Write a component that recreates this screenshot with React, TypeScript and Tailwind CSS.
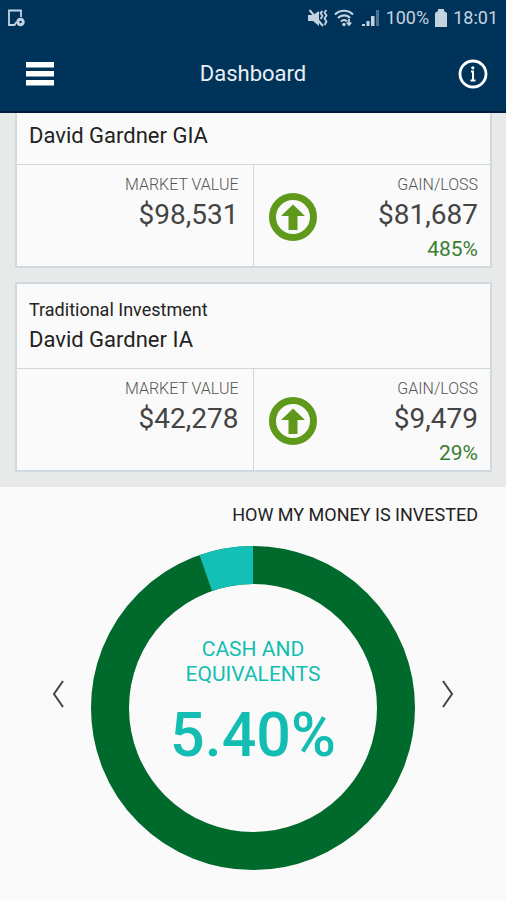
import React from 'react';

interface Account {
  type?: string;
  name: string;
  marketValue: string;
  gain: string;
  gainPercent: string;
}

const accounts: Account[] = [
  { name: 'David Gardner GIA', marketValue: '$98,531', gain: '$81,687', gainPercent: '485%' },
  { type: 'Traditional Investment', name: 'David Gardner IA', marketValue: '$42,278', gain: '$9,479', gainPercent: '29%' },
];

const allocation = { label: 'Cash and Equivalents', percent: 5.4 };

export default function App() {
  return (
    <div className="min-h-screen bg-[#fafafa] font-['Roboto',sans-serif] text-[#222222]">
      <header className="bg-[#00335a] text-white border-b-2 border-[#001c3c]">
        <StatusBar />
        <div className="flex items-center justify-between h-[75px] px-[18px]">
          <button aria-label="Menu" className="flex justify-center w-11">
            <svg viewBox="0 0 28 24" className="w-7 h-6" fill="currentColor">
              <path d="M0 0h28v5.6H0zM0 9h28v5.6H0zM0 18h28v5.6H0z" />
            </svg>
          </button>
          <h1 className="text-[22px] leading-7 text-[#e9eff5]">Dashboard</h1>
          <button aria-label="Information" className="flex justify-end w-11">
            <svg viewBox="0 0 30 30" className="w-[30px] h-[30px]" fill="none" stroke="currentColor">
              <circle cx="15" cy="15" r="13" strokeWidth="2.8" />
              <path d="M13 12.5h2v9M12.5 21.5h5" strokeWidth="2" />
              <circle cx="14.8" cy="8.8" r="1.6" fill="currentColor" stroke="none" />
            </svg>
          </button>
        </div>
      </header>

      <main>
        <section className="flex flex-col gap-[14px] bg-[#e8eaea] pl-[15px] pr-[14px] pb-[15px]">
          {accounts.map((account) => (
            <AccountCard key={account.name} account={account} />
          ))}
        </section>

        <section className="pt-4 pb-[30px]">
          <h2 className="px-7 text-right text-lg leading-6 uppercase">How my money is invested</h2>
          <div className="flex items-center justify-between px-[50px] mt-[19px]">
            <button aria-label="Previous" className="pb-7">
              <Chevron direction="left" />
            </button>
            <Donut />
            <button aria-label="Next" className="pb-7">
              <Chevron direction="right" />
            </button>
          </div>
        </section>
      </main>
    </div>
  );
}

function StatusBar() {
  return (
    <div className="flex items-center justify-between h-9 pl-[7px] pr-2 text-[#c5d3e0]">
      <svg viewBox="0 0 18 18" className="w-[18px] h-[18px]" fill="none" stroke="currentColor" strokeWidth="1.8">
        <path d="M14 8V1.5H2V16h5.5l2-3" />
        <circle cx="13.5" cy="13" r="2.7" strokeWidth="3" />
      </svg>
      <div className="flex items-center gap-[6px]">
        <svg viewBox="0 0 20 18" className="w-5 h-[18px]" fill="currentColor">
          <path d="M0 6h5l6-4v15l-6-5H0z" />
          <path d="M1.5 1l13.5 16" stroke="currentColor" strokeWidth="2" />
          <path d="M14.5 2l-2 2 2 3-2 3M18.5 1l-2 2.5 2 3-2 3 2 3-2 3.5" fill="none" stroke="currentColor" strokeWidth="1.8" />
        </svg>
        <svg viewBox="0 0 22 18" className="w-[22px] h-[18px]" fill="none" stroke="currentColor" strokeWidth="2.2">
          <path d="M1 5.5c5-5 13-5 18 0M4 9c3.5-3.5 9-3.5 12 0M7 12.500c2-2 4.500-2 6 0" />
          <circle cx="10" cy="15.5" r="1.7" fill="currentColor" stroke="none" />
          <path d="M15 10v5M12.8 13.5l2.2 2.5 2.2-2.500" strokeWidth="1.8" />
        </svg>
        <svg viewBox="0 0 18 18" className="w-[18px] h-[18px]" fill="currentColor">
          <path d="M0 15h3v2H0zM4.500 12h3v5h-3zM9 7h3.500v10H9z" />
          <path d="M14 1h3v16h-3z" opacity="0.4" />
        </svg>
        <span className="text-lg leading-6">100%</span>
        <svg viewBox="0 0 12 18" className="w-3 h-[18px]" fill="currentColor">
          <path d="M3 0h6v2l3 2v14H0V4l3-2z" />
        </svg>
        <span className="text-lg leading-6">18:01</span>
      </div>
    </div>
  );
}

function AccountCard({ account }: { account: Account }) {
  return (
    <article className={account.type ? 'bg-[#fafafa] border-2 border-[#d0d9de]' : 'bg-[#fafafa] border-2 border-t-0 border-[#d0d9de]'}>
      <div className={account.type ? 'px-3 pt-3 pb-3' : 'px-3 pt-[7px] pb-3'}>
        {account.type && <p className="text-lg leading-7">{account.type}</p>}
        <h2 className="text-[22px] leading-8">{account.name}</h2>
      </div>
      <div className="grid grid-cols-2 h-[102px] border-t border-[#d0d6da]">
        <div className="pt-2 pr-[14px] text-right border-r border-[#d0d6da]">
          <Amount label="Market value" value={account.marketValue} />
        </div>
        <div className="flex justify-between pt-2 pl-[15px] pr-3 text-right">
          <svg viewBox="0 0 48 48" className="w-12 h-12 mt-5" role="img" aria-label="Up">
            <circle cx="24" cy="24" r="20.5" fill="none" stroke="#5f991c" strokeWidth="7" />
            <path d="M24 11.5L36 23h-7.5v14h-9V23H12z" fill="#5f991c" />
          </svg>
          <div>
            <Amount label="Gain/Loss" value={account.gain} />
            <p className="text-[21px] leading-8 text-[#3a7d34]">{account.gainPercent}</p>
          </div>
        </div>
      </div>
    </article>
  );
}

function Amount({ label, value }: { label: string; value: string }) {
  return (
    <>
      <p className="text-base leading-6 font-light uppercase text-[#555555]">{label}</p>
      <p className="text-[28px] leading-9 text-[#444444]">{value}</p>
    </>
  );
}

function Donut() {
  const radius = 143;
  const circumference = 2 * Math.PI * radius;
  const slice = (circumference * allocation.percent) / 100;

  return (
    <div className="grid place-items-center">
      <svg viewBox="0 0 324 324" className="col-start-1 row-start-1 w-[324px] h-[324px]" fill="none" strokeWidth="38">
        <circle cx="162" cy="162" r={radius} stroke="#006a2c" />
        <circle
          cx="162"
          cy="162"
          r={radius}
          stroke="#14c0b5"
          strokeDasharray={`${slice} ${circumference - slice}`}
          strokeDashoffset={slice}
          transform="rotate(-90 162 162)"
        />
      </svg>
      <div className="col-start-1 row-start-1 w-44 pb-2 text-center text-[#14bdb2]">
        <p className="text-[21px] leading-[25px] uppercase">{allocation.label}</p>
        <p className="mt-3 text-[61px] leading-[72px] font-medium">{allocation.percent.toFixed(2)}%</p>
      </div>
    </div>
  );
}

function Chevron({ direction }: { direction: 'left' | 'right' }) {
  return (
    <svg viewBox="0 0 16 28" className="w-4 h-7" fill="none" stroke="#444444" strokeWidth="2">
      <path d={direction === 'left' ? 'M13 1L4 14l9 13' : 'M3 1l9 13-9 13'} />
    </svg>
  );
}
